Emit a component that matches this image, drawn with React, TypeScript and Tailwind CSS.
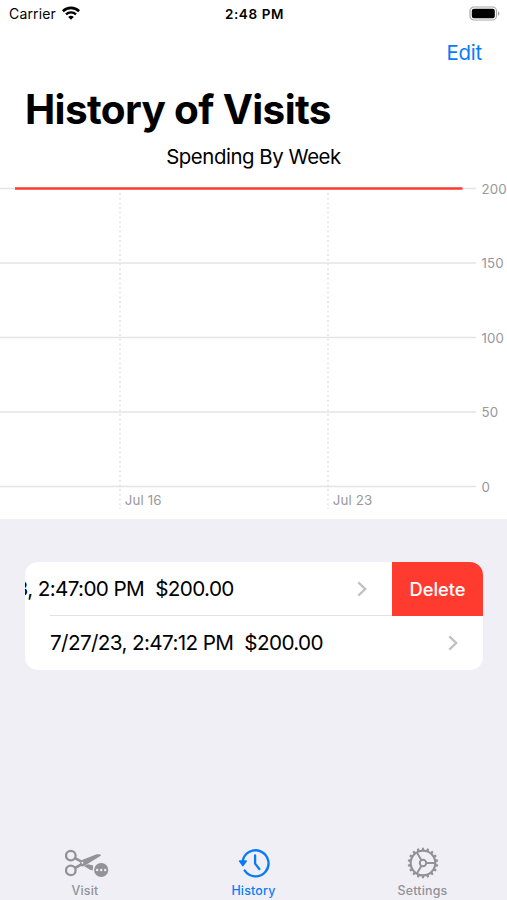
import React from 'react';

interface Visit {
  date: string;
  amount: string;
  swiped: boolean;
}

const visits: Visit[] = [
  { date: '7/12/23, 2:47:00 PM', amount: '$200.00', swiped: true },
  { date: '7/27/23, 2:47:12 PM', amount: '$200.00', swiped: false },
];

const yTicks = [
  { label: '200', y: 14 },
  { label: '150', y: 88.5 },
  { label: '100', y: 163 },
  { label: '50', y: 237.5 },
  { label: '0', y: 312 },
];

const xTicks = [
  { label: 'Jul 16', x: 120 },
  { label: 'Jul 23', x: 328 },
];

const StatusBar: React.FC = () => (
  <div className="grid h-7 grid-cols-3 items-center pl-[9px] pr-[7px] text-[13.5px]">
    <div className="flex items-center">
      <span className="mb-px w-[53px] whitespace-nowrap text-[14px] tracking-[0.15px]">Carrier</span>
      <svg className="mb-[2px] h-[14px] w-[18px]" viewBox="0 0 18 14" fill="none" stroke="#000" strokeWidth="2.6">
        <path d="M0.9 5.2C5.4.8 12.6.8 17.1 5.2" />
        <path d="M4 8.4c2.8-2.7 7.2-2.7 10 0" strokeWidth="2.4" />
        <path d="M9 13.7 6.2 10.9c1.5-1.5 4.1-1.5 5.6 0z" fill="#000" stroke="none" />
      </svg>
    </div>
    <span className="whitespace-nowrap text-center font-semibold tracking-[0.6px]">2:48 PM</span>
    <svg className="mb-[2px] h-[15px] w-[31px] justify-self-end" viewBox="0 0 31 15">
      <rect x="1" y="1" width="26.5" height="13" rx="4" fill="#fff" stroke="#a8a8a8" strokeWidth="1.2" />
      <rect x="2.8" y="2.8" width="23" height="9.4" rx="2.2" fill="#000" />
      <path d="M29 5.2c2 .9 2 3.7 0 4.6z" fill="#a8a8a8" />
    </svg>
  </div>
);

const SpendingChart: React.FC = () => (
  <svg className="block h-[345px] w-full" viewBox="0 0 507 345">
    {yTicks.map((tick) => (
      <g key={tick.label}>
        <line x1="0" x2="476" y1={tick.y + 0.5} y2={tick.y + 0.5} stroke="#e4e4e6" strokeWidth="1.5" />
        <text x="481.5" y={tick.y + 5.5} fontSize="13.3" letterSpacing="0.1" fill="#98989b">{tick.label}</text>
      </g>
    ))}
    {xTicks.map((tick) => (
      <g key={tick.label}>
        <line x1={tick.x} x2={tick.x} y1="19" y2="335" stroke="#dcdcde" strokeWidth="1.2" strokeDasharray="2 2.7" />
        <text x={tick.x + 4.7} y="331" fontSize="13.3" letterSpacing="0.15" fill="#98989b">{tick.label}</text>
      </g>
    ))}
    <line x1="15" x2="462.5" y1="14.5" y2="14.5" stroke="#ff3b30" strokeWidth="2.6" />
  </svg>
);

const Chevron: React.FC = () => (
  <svg className="h-4 w-[10px] shrink-0" viewBox="0 0 10 16" fill="none" stroke="#c2c2c5" strokeWidth="2.4">
    <path d="M1.3 1.3 8.2 8l-6.9 6.7" />
  </svg>
);

const VisitRow: React.FC<{ visit: Visit }> = ({ visit }) => (
  <div className="flex h-[54px] justify-end overflow-hidden">
    <div className="flex w-[458px] shrink-0 items-center justify-between pl-[25px] pr-[25px]">
      <span className="whitespace-pre text-[20.7px] tracking-[-0.63px]">
        {visit.date}
        <span className="ml-[11px]">{visit.amount}</span>
      </span>
      <Chevron />
    </div>
    {visit.swiped && (
      <button className="w-[91px] shrink-0 bg-[#ff3b30] pt-px text-[18.3px] font-medium text-white">
        Delete
      </button>
    )}
  </div>
);

const ScissorsIcon: React.FC = () => (
  <svg className="h-8 w-11" viewBox="0 0 44 32" fill="none">
    <circle cx="5.8" cy="8.6" r="4.8" stroke="#929297" strokeWidth="2.3" />
    <circle cx="5.8" cy="23.4" r="4.8" stroke="#929297" strokeWidth="2.3" />
    <path d="M10 11.1 17.4 15.2M10 21 16.5 17.3" stroke="#929297" strokeWidth="2.6" />
    <path
      d="M14.2 18 16.4 13.8c.8-1 2-1.5 3.2-1.9l11.4-4.3c2.2-.8 4.4-.6 5.2.9L22 17.2c-1.8 1.1-3 1.9-4.8 2.2z"
      fill="#929297"
    />
    <path d="m19 19 4-1.8 5.2 1.4-.5 4.8-2.6-.6z" fill="#929297" />
    <circle cx="17.4" cy="15.8" r="1" fill="#f0eff5" />
    <circle cx="36.2" cy="23" r="8.2" fill="#f0eff5" />
    <circle cx="36.2" cy="23" r="7.1" fill="#929297" />
    <g fill="#f0eff5">
      <circle cx="32.2" cy="23" r="1.2" />
      <circle cx="36.2" cy="23" r="1.2" />
      <circle cx="40.2" cy="23" r="1.2" />
    </g>
  </svg>
);

const HistoryIcon: React.FC = () => (
  <svg className="h-8 w-8" viewBox="0 0 32 32" fill="none" stroke="#087cf8" strokeWidth="2.3" strokeLinecap="round" strokeLinejoin="round">
    <path d="M4.7 14.2a13 13 0 1 1 1.9 9.2" />
    <path d="m1.6 14.1h6.6l-3.3 4.5z" fill="#087cf8" strokeWidth="1.6" />
    <path d="M17.1 8.5v8.1l4.2 5.4" />
  </svg>
);

const GearIcon: React.FC = () => (
  <svg className="h-8 w-8" viewBox="0 0 32 32" fill="none" stroke="#929297">
    <circle cx="16" cy="16" r="12.3" strokeWidth="2.1" />
    {Array.from({ length: 18 }, (_, i) => (
      <path key={i} d="M14.4 3.6 15.1.7h1.8l.7 2.9z" fill="#929297" stroke="none" transform={`rotate(${i * 20} 16 16)`} />
    ))}
    <circle cx="16" cy="16" r="3.2" strokeWidth="2" />
    <path d="M19.4 16h8.6M14.3 13 9.9 5.6M14.3 19 9.9 26.4" strokeWidth="2" />
  </svg>
);

const TabBar: React.FC = () => (
  <nav className="grid h-[53px] grid-cols-3 text-[12.4px] font-medium tracking-[0.2px] text-[#929297]">
    <div className="flex flex-col items-center gap-1">
      <div className="pl-[4px]">
        <ScissorsIcon />
      </div>
      <span className="pl-px leading-4">Visit</span>
    </div>
    <div className="flex flex-col items-center gap-1 text-[#087cf8]">
      <HistoryIcon />
      <span className="leading-4">History</span>
    </div>
    <div className="flex flex-col items-center gap-1">
      <GearIcon />
      <span className="leading-4">Settings</span>
    </div>
  </nav>
);

const App: React.FC = () => {
  return (
    <div className="flex h-[900px] w-[507px] flex-col overflow-hidden bg-[#f0eff5] font-['Inter',sans-serif] text-black">
      <header className="h-[519px] shrink-0 bg-white">
        <StatusBar />
        <div className="flex h-12 items-center justify-end pr-[25px] pt-[2px]">
          <button className="text-[20.4px] tracking-[-0.2px] text-[#087cf8]">Edit</button>
        </div>
        <h1 className="h-[66px] pl-[25px] text-[40.5px] font-bold leading-[68px] tracking-[-0.65px]">
          History of Visits
        </h1>
        <h2 className="h-8 text-center text-[20.4px] leading-[30px] tracking-[-0.45px]">Spending By Week</h2>
        <SpendingChart />
      </header>

      {/* Visit list */}
      <main className="grow px-[25px] pt-[43px]">
        <div className="w-[458px] overflow-hidden rounded-[13px] bg-white">
          {visits.map((visit, i) => (
            <div key={visit.date}>
              {i > 0 && <div className="-mt-px ml-[25px] mr-[91px] h-px bg-[#e2e2e4]" />}
              <VisitRow visit={visit} />
            </div>
          ))}
        </div>
      </main>

      <TabBar />
    </div>
  );
};

export default App;
